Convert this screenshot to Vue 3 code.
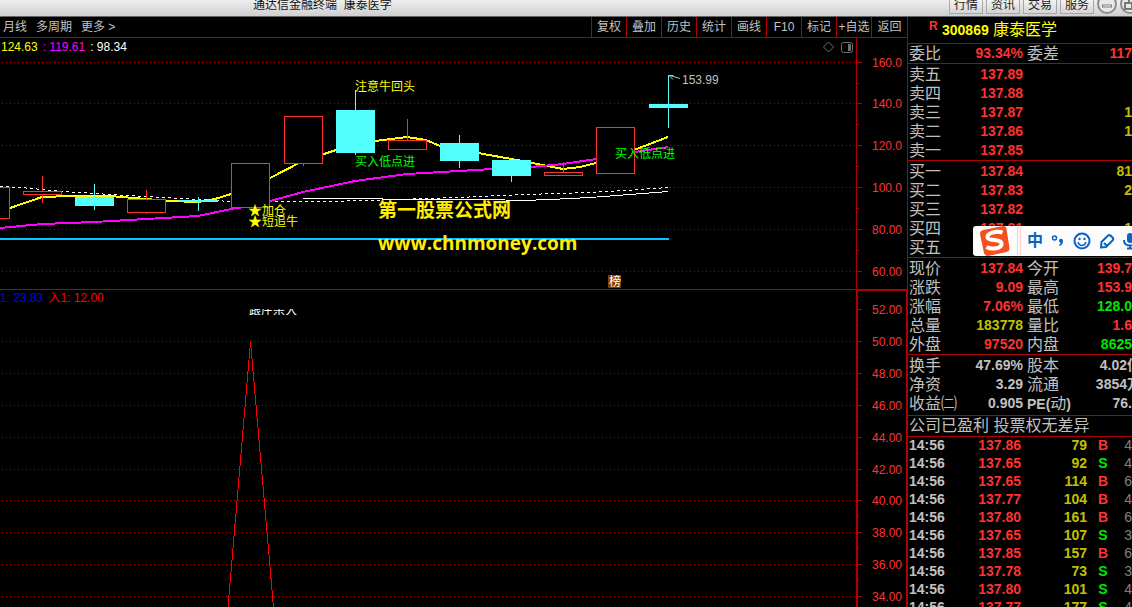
<script setup>
const windowButtons = ['行情', '资讯', '交易', '服务']
const periods = ['月线', '多周期', '更多 >']
const tools = ['复权', '叠加', '历史', '统计', '画线', 'F10', '标记', '+自选', '返回']

const priceGrid = [
  { y: 62, label: '160.0' },
  { y: 103, label: '140.0' },
  { y: 145, label: '120.0' },
  { y: 187, label: '100.0' },
  { y: 229, label: '80.00' },
  { y: 271, label: '60.00' }
]
const priceMinor = [83, 124, 166, 208, 250]

const signalGrid = [
  { y: 309, label: '52.00' },
  { y: 341, label: '50.00' },
  { y: 373, label: '48.00' },
  { y: 405, label: '46.00' },
  { y: 437, label: '44.00' },
  { y: 469, label: '42.00' },
  { y: 500, label: '40.00' },
  { y: 532, label: '38.00' },
  { y: 564, label: '36.00' },
  { y: 596, label: '34.00' }
]
const signalMinor = [325, 357, 389, 421, 453, 485, 516, 548, 580]

// x: centre of the candle, top/bottom: body, high/low: wick
const candles = [
  { x: -10, top: 187, bottom: 218, high: 187, low: 218, up: true },
  { x: 42, top: 191, bottom: 194, high: 176, low: 203, up: true },
  { x: 94, top: 197, bottom: 205, high: 184, low: 210, up: false },
  { x: 146, top: 199, bottom: 212, high: 190, low: 214, up: true },
  { x: 198, top: 200, bottom: 201, high: 197, low: 211, up: false },
  { x: 250, top: 163, bottom: 207, high: 163, low: 207, up: true },
  { x: 303, top: 116, bottom: 163, high: 116, low: 166, up: true },
  { x: 355, top: 110, bottom: 152, high: 90, low: 155, up: false },
  { x: 407, top: 140, bottom: 149, high: 119, low: 149, up: true },
  { x: 459, top: 143, bottom: 160, high: 135, low: 168, up: false },
  { x: 511, top: 160, bottom: 175, high: 160, low: 182, up: false },
  { x: 563, top: 172, bottom: 175, high: 162, low: 175, up: true },
  { x: 615, top: 127, bottom: 173, high: 127, low: 173, up: true },
  { x: 668, top: 104, bottom: 107, high: 75, low: 128, up: false }
]

const sells = [
  ['卖五', '137.89', ''],
  ['卖四', '137.88', ''],
  ['卖三', '137.87', '1'],
  ['卖二', '137.86', '1'],
  ['卖一', '137.85', '']
]
const buys = [
  ['买一', '137.84', '81'],
  ['买二', '137.83', '2'],
  ['买三', '137.82', ''],
  ['买四', '137.81', '1'],
  ['买五', '', '']
]
const quotes = [
  ['现价', '137.84', 'red', '今开', '139.7', 'red'],
  ['涨跌', '9.09', 'red', '最高', '153.9', 'red'],
  ['涨幅', '7.06%', 'red', '最低', '128.0', 'green'],
  ['总量', '183778', 'gold', '量比', '1.6', 'red'],
  ['外盘', '97520', 'red', '内盘', '8625', 'green']
]
const facts = [
  ['换手', '47.69%', '股本', '4.02亿', true],
  ['净资', '3.29', '流通', '3854万', true],
  ['收益㈡', '0.905', 'PE(动)', '76.', false]
]
const ticks = [
  ['137.86', '79', 'B', '4'],
  ['137.65', '92', 'S', '4'],
  ['137.65', '114', 'B', '6'],
  ['137.77', '104', 'B', '4'],
  ['137.80', '161', 'B', '6'],
  ['137.65', '107', 'S', '3'],
  ['137.85', '157', 'B', '6'],
  ['137.78', '73', 'S', '3'],
  ['137.80', '101', 'S', '4'],
  ['137.77', '177', 'S', '4']
]
</script>

<template>
  <div class="terminal">
    <header class="titlebar">
      <h1 class="title">通达信金融终端&nbsp; 康泰医学</h1>
      <nav class="winbar">
        <button v-for="b in windowButtons" :key="b" type="button" class="winbtn">{{ b }}</button>
        <button type="button" class="round" aria-label="最小化">
          <svg width="20" height="20" viewBox="0 0 20 20">
            <circle cx="10" cy="10" r="9" fill="#e8e8e8" stroke="#8c8c8c" stroke-width="2" />
            <path d="M5 12h10" stroke="#777" stroke-width="3" />
            <path d="M6 12h8" stroke="#fff" />
          </svg>
        </button>
        <button type="button" class="round" aria-label="还原">
          <svg width="20" height="20" viewBox="0 0 20 20">
            <circle cx="10" cy="10" r="9" fill="#e8e8e8" stroke="#8c8c8c" stroke-width="2" />
            <path d="M5 9h7v6H5zM9 8V5h7v6h-3" fill="none" stroke="#777" stroke-width="2" />
          </svg>
        </button>
      </nav>
    </header>

    <div class="body">
      <main class="main">
        <div class="toolbar">
          <div class="periods">
            <button v-for="p in periods" :key="p" type="button">{{ p }}</button>
          </div>
          <div class="tools">
            <button v-for="t in tools" :key="t" type="button">{{ t }}</button>
          </div>
        </div>

        <section class="panel price">
          <div class="plot">
            <div class="legend">
              <span class="ma1">124.63</span>
              <span class="ma2">: 119.61</span>
              <span class="ma3">: 98.34</span>
              <svg class="corner" width="34" height="14" viewBox="0 0 34 14" aria-hidden="true">
                <path d="M6.500 2l5 5-5 5-5-5z" fill="none" stroke="#707070" />
                <rect x="19.500" y="2.500" width="11" height="10" rx="2" fill="none" stroke="#707070" />
                <rect x="26" y="4" width="3" height="7" fill="#707070" />
              </svg>
            </div>
            <svg class="canvas" width="100%" height="233">
              <g transform="translate(0 -56)">
                <g class="grid">
                  <line v-for="g in priceGrid" :key="g.y" x1="2" x2="100%" :y1="g.y + 0.5" :y2="g.y + 0.5" />
                </g>
                <g class="curves">
                  <polyline stroke="#fff" stroke-dasharray="3 3" points="0,186.5 20,187.5 42,189.5 65,191.5 94,193.5 146,196.5 198,199.5 231,201.5 270,201.5 330,201.5 400,199.5 421,198.5 459,197.5 523,194.5 560,193.5 590,192.5 625,190.5 668,187.5" />
                  <polyline stroke="#fff" points="303,198.5 382,198.5 383,199.5 487,199.5 523,200.5 550,199.5 590,197.5 630,194.5 668,191.5" />
                  <polyline stroke="#ff0" stroke-width="2" points="-10,213 10,208 42,197 70,196 110,196 146,199 170,201 198,202 215,199 231,194 270,178 303,161 336,150 355,144 375,141 407,137 426,140 440,146 478,153 517,160 532,163 563,169 580,167 596,163 634,150 668,137" />
                  <polyline stroke="#f0f" stroke-width="2" points="0,228 42,224 94,222 146,219 198,216 231,209 250,206 270,201 303,192 355,181 407,174 459,171 492,169 531,167 563,164 596,159 635,152 668,147" />
                  <line x1="0" x2="669" y1="239" y2="239" stroke="#00c8ff" stroke-width="2" />
                </g>
                <g v-for="c in candles" :key="c.x" :class="c.up ? 'up' : 'down'">
                  <line :x1="c.x + 0.5" :x2="c.x + 0.5" :y1="c.high" :y2="c.low" />
                  <rect :x="c.x - 18.5" :y="c.top + 0.5" width="38" :height="c.bottom - c.top" />
                </g>
                <path d="M668.500 75.500h5M669 75.500l4 4M670 75.500l10 3" fill="none" stroke="#c0c0c0" />
                <g class="marks">
                  <text x="682" y="84" fill="#c0c0c0">153.99</text>
                  <text x="355" y="91" fill="#ff0">注意牛回头</text>
                  <text x="355" y="166" fill="#0f0">买入低点进</text>
                  <text x="615" y="158" fill="#0f0">买入低点进</text>
                  <text x="248" y="215" fill="#ff0"><tspan class="star">★</tspan>加仓</text>
                  <text x="248" y="226" fill="#ff0"><tspan class="star">★</tspan>短追牛</text>
                </g>
                <rect x="608" y="275" width="13" height="13" rx="1" fill="#804000" />
                <text class="rank" x="609" y="286">榜</text>
                <text class="watermark" x="378" y="217">第一股票公式网</text>
                <text class="watermark site" x="378" y="250">www.chnmoney.com</text>
              </g>
            </svg>
          </div>
          <svg class="axis" width="50" height="251">
            <g transform="translate(-857 -38)">
              <path v-for="m in priceMinor" :key="m" :d="`M857 ${m}.500h2`" />
              <g v-for="g in priceGrid" :key="g.y">
                <path :d="`M857 ${g.y}.500h5`" />
                <text x="902" :y="g.y + 5">{{ g.label }}</text>
              </g>
            </g>
          </svg>
        </section>

        <section class="panel signal">
          <div class="plot">
            <div class="legend">
              <span class="out">1: 23.83</span>
              <span class="in">入1: 12.00</span>
            </div>
            <svg class="canvas" width="100%" height="300">
              <defs>
                <clipPath id="band"><rect x="240" y="309" width="70" height="6" /></clipPath>
              </defs>
              <g transform="translate(0 -307)">
                <g class="grid">
                  <line v-for="g in signalGrid.slice(1)" :key="g.y" x1="2" x2="100%" :y1="g.y + 0.5" :y2="g.y + 0.5" />
                </g>
                <polyline class="spike" points="228,607 250.500,342 273.500,607" />
                <text class="note" x="249" y="315" clip-path="url(#band)">跟庄杀入</text>
              </g>
            </svg>
          </div>
          <svg class="axis" width="48" height="316">
            <g transform="translate(-858 -291)">
              <path v-for="m in signalMinor" :key="m" :d="`M858 ${m}.500h1`" />
              <g v-for="g in signalGrid" :key="g.y">
                <path :d="`M858 ${g.y}.500h4`" />
                <text x="902" :y="g.y + 5">{{ g.label }}</text>
              </g>
            </g>
          </svg>
        </section>
      </main>

      <aside class="side">
        <h2 class="stock"><sup>R</sup><b>300869</b><span>康泰医学</span></h2>
        <table class="grid4 ratio">
          <colgroup><col class="c1" /><col class="c2" /><col class="c3" /><col /></colgroup>
          <tbody>
            <tr>
              <th>委比</th><td class="red">93.34%</td><th class="second">委差</th><td class="red">117</td>
            </tr>
          </tbody>
        </table>
        <table v-for="(book, i) in [sells, buys]" :key="i" class="grid4 block">
          <colgroup><col class="c1" /><col class="c2" /><col /></colgroup>
          <tbody>
            <tr v-for="r in book" :key="r[0]">
              <th>{{ r[0] }}</th><td class="red">{{ r[1] }}</td><td class="gold">{{ r[2] }}</td>
            </tr>
          </tbody>
        </table>
        <table class="grid4 block">
          <colgroup><col class="c1" /><col class="c2" /><col class="c3" /><col /></colgroup>
          <tbody>
            <tr v-for="q in quotes" :key="q[0]">
              <th>{{ q[0] }}</th><td :class="q[2]">{{ q[1] }}</td>
              <th class="second">{{ q[3] }}</th><td :class="q[5]">{{ q[4] }}</td>
            </tr>
          </tbody>
        </table>
        <table class="grid4 block facts">
          <colgroup><col class="c1" /><col class="c2" /><col class="c3" /><col /></colgroup>
          <tbody>
            <tr v-for="f in facts" :key="f[0]">
              <th>{{ f[0] }}</th><td>{{ f[1] }}</td>
              <th class="second"><template v-if="f[2] === 'PE(动)'"><b>PE(</b>动<b>)</b></template><template v-else>{{ f[2] }}</template></th>
              <td><span :class="{ spill: f[4] }">{{ f[3] }}</span></td>
            </tr>
          </tbody>
        </table>
        <p class="status">公司已盈利 投票权无差异</p>
        <table class="ticks">
          <colgroup><col class="t1" /><col class="t2" /><col class="t3" /><col class="t4" /><col /></colgroup>
          <tbody>
            <tr v-for="(t, i) in ticks" :key="i">
              <td class="time">14:56</td>
              <td class="red">{{ t[0] }}</td>
              <td class="gold">{{ t[1] }}</td>
              <td class="dir" :class="t[2] === 'B' ? 'red' : 'green'">{{ t[2] }}</td>
              <td class="count">{{ t[3] }}</td>
            </tr>
          </tbody>
        </table>

        <div class="ime">
          <svg class="logo" width="34" height="30" viewBox="0 0 34 30" aria-hidden="true">
            <path d="M8 4L28 0q3 0 3.500 3l3 19q0 3-3 4L13 30q-3 0-4-3L5 8q0-3 3-4z" transform="translate(-2 0)" fill="#f4511e" />
            <path d="M25.500 6.500C19 4.500 10 7 10.500 11.500 11 15.500 24 12.500 24.500 17.500 25 22.500 15 24 9.500 21" fill="none" stroke="#fff" stroke-width="4" />
          </svg>
          <span class="bar"></span>
          <button type="button" class="lang">中</button>
          <button type="button" aria-label="标点">
            <svg width="14" height="18" viewBox="0 0 14 18">
              <circle cx="3.500" cy="6" r="2" fill="none" stroke="#0a62c4" stroke-width="1.500" />
              <path d="M8 8.500a2 2 0 1 1 4 .5q0 3.500-3.500 5l-.5-1q1.500-1 1.500-2.200Q8 10.500 8 8.500z" fill="#0a62c4" />
            </svg>
          </button>
          <button type="button" aria-label="表情">
            <svg width="18" height="18" viewBox="0 0 18 18">
              <circle cx="9" cy="9" r="7.500" fill="none" stroke="#0a62c4" stroke-width="2" />
              <path d="M5 10q1 3.500 4 3.500t4-3.500" fill="none" stroke="#0a62c4" stroke-width="1.500" />
              <circle cx="6.500" cy="7" r="1.200" fill="#0a62c4" /><circle cx="11.500" cy="7" r="1.200" fill="#0a62c4" />
            </svg>
          </button>
          <button type="button" aria-label="手写">
            <svg width="16" height="18" viewBox="0 0 16 18">
              <path d="M2 15.500L2.500 10 9 3.500q1.500-1 3 .5l1.500 1.500q1.500 1.500 0 3L7 15zM5 11l3 3" fill="none" stroke="#0a62c4" stroke-width="2" />
            </svg>
          </button>
          <button type="button" aria-label="语音">
            <svg width="14" height="18" viewBox="0 0 14 18">
              <rect x="4" y="1" width="6" height="10" rx="3" fill="#0a62c4" />
              <path d="M1 8q0 5.500 6 5.500T13 8M7 13.500V17M4 16.500h6" fill="none" stroke="#0a62c4" stroke-width="2" />
            </svg>
          </button>
        </div>
      </aside>
    </div>
  </div>
</template>

<style>
body {
  background: #000;
  overflow: hidden;
}
</style>

<style scoped>
.terminal {
  display: flex;
  flex-direction: column;
  height: 100vh;
  overflow: hidden;
  background: #000;
  color: #c0c0c0;
  font: 12px/18px "Liberation Sans", "Noto Sans CJK SC", sans-serif;
}
button {
  font: inherit;
  color: inherit;
  background: none;
  border: 0;
  padding: 0;
}
h1, h2, p { margin: 0; }

.titlebar {
  display: flex;
  align-items: flex-end;
  justify-content: space-between;
  flex: none;
  box-sizing: border-box;
  height: 17px;
  overflow: hidden;
  background: linear-gradient(#efefef, #cfcfcf);
  border-bottom: 1px solid #666;
}
.title {
  padding: 0 0 2px 253px;
  font-size: 12px;
  font-weight: 400;
  color: #111;
  white-space: nowrap;
}
.winbar {
  display: flex;
  align-items: flex-end;
  gap: 3px;
  width: 183px;
  flex: none;
  padding-bottom: 2px;
}
.winbtn {
  flex: none;
  box-sizing: border-box;
  width: 34px;
  height: 20px;
  padding-top: 2px;
  color: #222;
  line-height: 14px;
  background: linear-gradient(#fff, #d4d4d4);
  border: 1px solid #a8a8a8;
}
.round { flex: none; height: 20px; }
.round svg { display: block; }

.body { display: flex; flex: 1; min-height: 0; }
.main { display: flex; flex-direction: column; flex: 1; min-width: 0; }
.toolbar {
  display: flex;
  justify-content: space-between;
  height: 20px;
  flex: none;
  border-bottom: 1px solid #b00000;
}
.periods { display: flex; gap: 9px; padding-left: 3px; }
.tools { display: flex; }
.tools button {
  width: 35px;
  box-sizing: border-box;
  border-left: 1px solid #b00000;
  white-space: nowrap;
}
.tools button:last-child { width: 36px; }

.panel { display: flex; flex: none; }
.plot { flex: 1; min-width: 0; }
.price .axis { border-left: 1px solid #b00000; }
.signal .plot { border-top: 1px solid #b00000; }
.signal .axis {
  border: 2px solid #b00000;
  border-right-width: 1px;
  border-bottom: 0;
}
.legend { display: flex; align-items: center; gap: 5px; height: 18px; padding-left: 1px; white-space: pre; }
.signal .legend { align-items: flex-start; height: 17px; padding-left: 0; line-height: 16px; }
.corner { margin-left: auto; }
.ma1 { color: #ff0; }
.ma2 { color: #f0f; }
.ma3 { color: #fff; }
.out { color: #00f; }
.in { color: #f00; }
.canvas { display: block; overflow: hidden; }
.axis { flex: none; overflow: hidden; }
.axis path { stroke: #b00000; }
.axis text { fill: #ff3232; text-anchor: end; }
.grid line { stroke: #b00000; stroke-dasharray: 1 3; shape-rendering: crispEdges; }
.curves { fill: none; shape-rendering: crispEdges; }
.up line, .up rect { stroke: #ff3232; fill: #000; }
.down line, .down rect { stroke: #54ffff; fill: #54ffff; }
.star { font-size: 14px; }
.rank, .note { fill: #fff; }
.watermark { fill: #ffee00; font-weight: 700; font-size: 19px; }
.site { font-family: "Open Sans", "Noto Sans", sans-serif; }
.spike { fill: none; stroke: #f00; shape-rendering: crispEdges; }

.side {
  position: relative;
  flex: none;
  width: 224px;
  overflow: hidden;
  border-left: 1px solid #b00000;
}
.stock {
  display: flex;
  align-items: center;
  height: 26px;
  padding-left: 21px;
  color: #ff0;
  font-size: 16px;
  font-weight: 400;
  border-bottom: 1px solid #b00000;
}
.stock sup { width: 13px; height: 26px; font-size: 12px; font-weight: 700; color: #ff3232; }
.stock b { width: 51px; font-size: 14px; }
table { width: 100%; table-layout: fixed; border-collapse: separate; border-spacing: 0; }
th, td { padding: 0; line-height: 19px; white-space: nowrap; }
th { padding-left: 1px; font-size: 16px; font-weight: 400; text-align: left; }
th b { font-size: 14px; line-height: 14px; }
th.second { padding-left: 4px; }
td { font-size: 14px; font-weight: 700; text-align: right; }
tr { height: 19px; }
.c1 { width: 50px; }
.c2 { width: 65px; }
.c3 { width: 48px; }
.ratio { border-bottom: 1px solid #b00000; }
.block { padding-top: 1px; border-bottom: 1px solid #b00000; }
.facts { padding-bottom: 2px; }
.spill { margin-right: -9px; }
.red { color: #ff3232; }
.green { color: #00e600; }
.gold { color: #c0c000; }
.status {
  height: 20px;
  padding-left: 1px;
  font-size: 16px;
  line-height: 20px;
  white-space: nowrap;
  border-bottom: 1px solid #b00000;
}
.ticks tr { height: 18px; }
.ticks td { line-height: 17px; vertical-align: top; }
.t1 { width: 50px; }
.t2 { width: 63px; }
.t3 { width: 66px; }
.t4 { width: 32px; }
.ticks .time { padding-left: 1px; text-align: left; }
.ticks .dir { text-align: center; }
.ticks .count { color: #808080; font-weight: 400; }

.ime {
  position: absolute;
  top: 209px;
  left: 65px;
  right: 0;
  display: flex;
  align-items: center;
  gap: 8px;
  height: 30px;
  overflow: hidden;
  padding-left: 4px;
  background: #fcfcfc;
  border-radius: 3px 0 0 3px;
}
.ime > * { flex: none; }
.ime button { display: flex; color: #0a62c4; }
.ime .lang { font-size: 16px; font-weight: 700; }
.bar { width: 2px; height: 28px; margin: 0 -2px; border: solid #ffd0c0; border-width: 0 1px; }
</style>
